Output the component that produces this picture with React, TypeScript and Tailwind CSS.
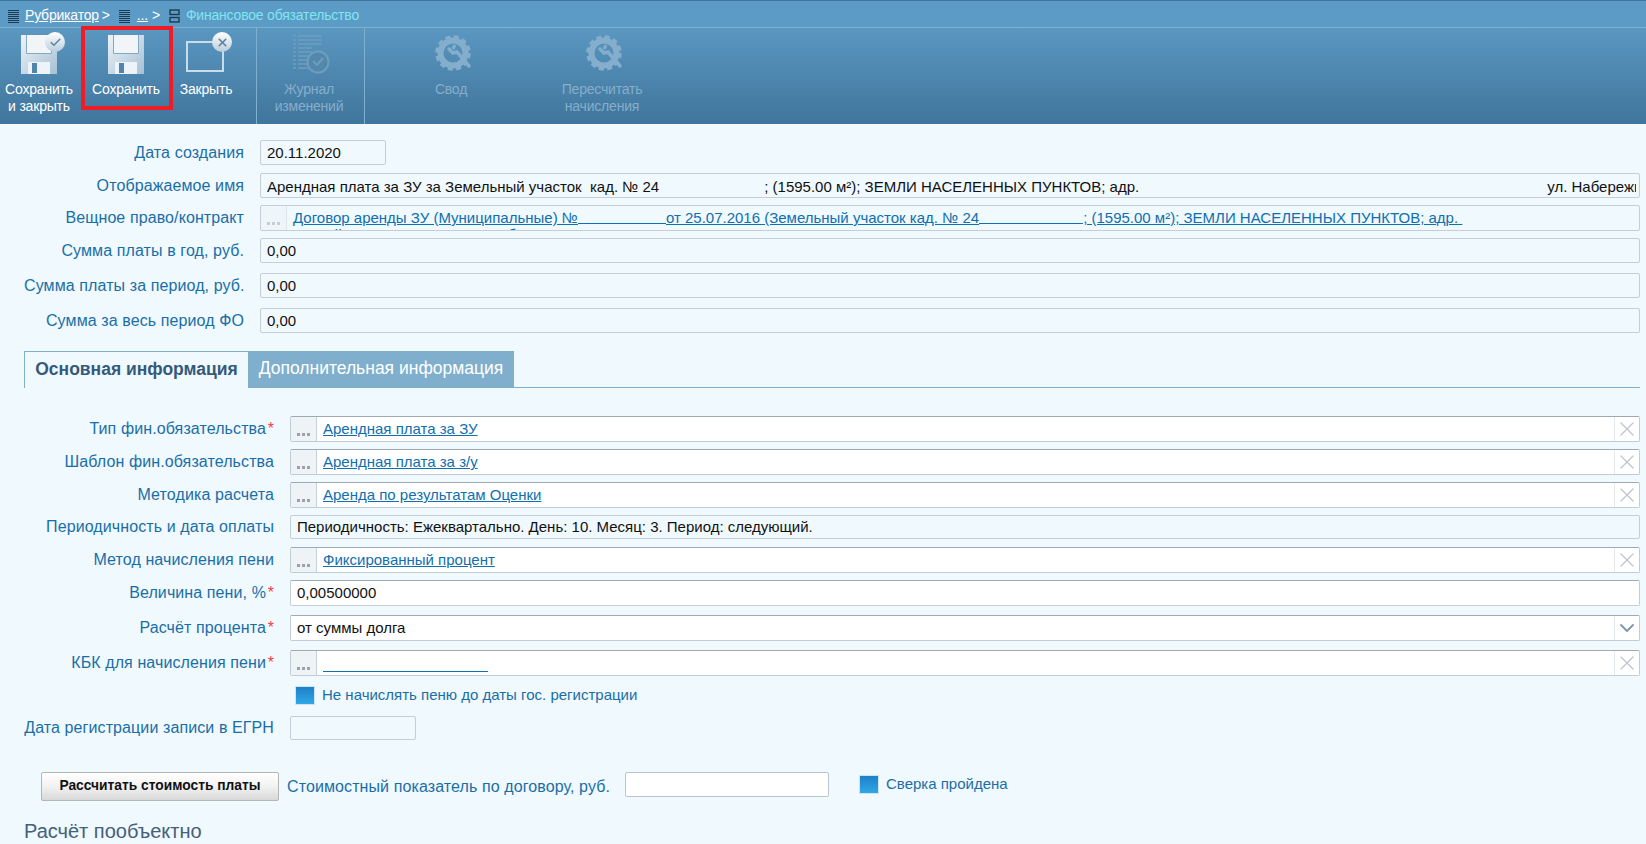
import React from 'react';
import { X, Check, ChevronDown } from 'lucide-react';

const SANS = { fontFamily: '"Liberation Sans", Arial, sans-serif' };

// floppy disk from the toolbar
const Floppy: React.FC<{ className?: string }> = ({ className }) => (
  <svg width="36" height="39" viewBox="0 0 36 39" className={className}>
    <defs>
      <linearGradient id="fl" x1="0" y1="0" x2="1" y2="1">
        <stop offset="0" stopColor="#eef4f8" />
        <stop offset="1" stopColor="#a6c0d4" />
      </linearGradient>
    </defs>
    <path d="M0 0h36v39H0z" fill="url(#fl)" />
    <path d="M6 0h24v18H6z" fill="#f1f5f8" />
    <path d="M5.5 0v18.5h25V0" fill="none" stroke="#84a9c4" strokeWidth="1" />
    <path d="M7 27h22v12H7z" fill="#eef3f7" />
    <path d="M11 28h5v10h-5z" fill="#4f86ad" />
  </svg>
);

const Gear: React.FC = () => (
  <svg width="38" height="38" viewBox="0 0 38 38" fill="none" stroke="#84aecb">
    <circle cx="18" cy="18" r="12.5" strokeWidth="6" />
    <circle cx="18" cy="18" r="16" strokeWidth="3.5" strokeDasharray="5 3.4" />
    <path d="M14 14l4 4 4-1 12 14" strokeWidth="3.5" strokeLinecap="round" />
    <path d="M20 10l-2 4" strokeWidth="3" />
  </svg>
);

const Journal: React.FC = () => (
  <svg width="40" height="42" viewBox="0 0 40 42" fill="none" stroke="#6f9dbd" strokeWidth="1.6">
    {[1, 5, 9, 13, 17, 21, 25, 29, 33].map((y, i) => (
      <path key={y} d={`M1 ${y}h3M6 ${y}h${i < 3 ? 24 : 14}`} />
    ))}
    <circle cx="26" cy="27" r="10.5" strokeWidth="2" fill="#5288ac" />
    <path d="M21 26l4 4 6-7" strokeWidth="2" />
  </svg>
);

const ListIcon: React.FC<{ stack?: boolean; className?: string }> = ({ stack, className }) =>
  stack ? (
    <svg width="11" height="14" viewBox="0 0 11 14" className={className} fill="none" stroke="#1d3a50" strokeWidth="1.4">
      <rect x="1" y="1" width="9" height="4.5" />
      <rect x="1" y="8.5" width="9" height="4.5" />
    </svg>
  ) : (
    <svg width="11" height="14" viewBox="0 0 11 14" className={className} stroke="#1d3a50" strokeWidth="1">
      {[1.5, 3.5, 5.5, 7.5, 9.5, 11.5, 13.5].map((y) => (
        <path key={y} d={`M0 ${y}h11`} />
      ))}
    </svg>
  );

const Badge: React.FC<{ className: string; children: React.ReactNode }> = ({ className, children }) => (
  <span className={`absolute flex h-[20px] w-[20px] items-center justify-center rounded-full bg-gradient-to-b from-white to-[#b9cedd] text-[#5d8099] ${className}`}>
    {children}
  </span>
);

const ToolLabel: React.FC<{ className: string; dim?: boolean; children: React.ReactNode }> = ({ className, dim, children }) => (
  <div
    className={`absolute text-center text-[14px] leading-[17px] -tracking-[0.2px] whitespace-nowrap -translate-x-1/2 ${dim ? 'text-[#86aeca]' : 'text-white'} ${className}`}
  >
    {children}
  </div>
);

const Label: React.FC<{ children: React.ReactNode; star?: boolean; wide?: boolean }> = ({ children, star, wide }) => (
  <div className={`shrink-0 whitespace-nowrap text-right text-[16px] leading-none tracking-[0.1px] text-[#1a6ea8] ${wide ? 'w-[250px]' : 'w-[220px]'}`}>
    {children}
    {star && <span className="inline-block w-[8px] text-right text-[#f0404f]">*</span>}
  </div>
);

const Dots: React.FC<{ faded?: boolean }> = ({ faded }) => (
  <div className={`flex h-full w-[26px] shrink-0 items-end justify-center gap-[2px] border-r border-[#c6d0da] bg-[#eef3f6] pb-[5px] ${faded ? 'opacity-50' : ''}`}>
    <i className="h-[3px] w-[3px] bg-[#9aa3ac]" />
    <i className="h-[3px] w-[3px] bg-[#9aa3ac]" />
    <i className="h-[3px] w-[3px] bg-[#9aa3ac]" />
  </div>
);

const Lookup: React.FC<{ text?: string; blank?: boolean }> = ({ text, blank }) => (
  <div className="flex h-full w-[1350px] overflow-hidden rounded-[2px] border border-[#c3ccd6] border-t-[#9ea9b4] bg-white">
    <Dots />
    <div className="flex-1 pl-[6px] text-[15px] leading-[23px] text-[#0f6fb0]">
      {blank ? <span className="mt-[20px] block h-px w-[165px] bg-[#0f6fb0]" /> : <span className="underline">{text}</span>}
    </div>
    <div className="flex w-[25px] shrink-0 items-center justify-center border-l border-[#e4e9ee] bg-white text-[#bcc5d0]">
      <X size={24} strokeWidth={1.3} />
    </div>
  </div>
);

const ReadOnly: React.FC<{ children?: React.ReactNode; className?: string }> = ({ children, className }) => (
  <div className={`h-full overflow-hidden whitespace-nowrap rounded-[2px] border border-[#c5ced8] pl-[6px] pr-[3px] text-[15px] text-[#111] ${className ?? 'w-[1380px] leading-[23px]'}`}>
    <div className="overflow-hidden">{children}</div>
  </div>
);

const Gap: React.FC<{ w: string }> = ({ w }) => <span className={`inline-block ${w}`} />;

// redacted stretch of a link, the underline still runs through it
const LinkGap: React.FC<{ w: string }> = ({ w }) => <span className={`inline-block h-px translate-y-[1px] bg-[#0f6fb0] ${w}`} />;

const Tick: React.FC = () => (
  <span className="block h-[19px] w-[20px] shrink-0 border border-[#cfe4f2] bg-gradient-to-b from-[#1f80c8] to-[#2fa8e6]" />
);

export default function App() {
  return (
    <div className="relative h-[844px] w-[1646px] overflow-hidden bg-[#f0f9fd]" style={SANS}>
      {/* breadcrumb */}
      <div className="relative h-[27px] border-t border-[#3f7499] bg-[#5c9bc6]">
        <div className="flex h-[26px] items-center pt-[3px] text-[14px] -tracking-[0.2px]">
          <ListIcon className="ml-[8px]" />
          <a className="ml-[6px] text-white underline">Рубрикатор</a>
          <span className="ml-[3px] text-white">&gt;</span>
          <ListIcon className="ml-[9px]" />
          <a className="ml-[7px] text-white underline">...</a>
          <span className="ml-[4px] text-white">&gt;</span>
          <ListIcon stack className="ml-[9px]" />
          <span className="ml-[6px] text-[#7fe6f0]">Финансовое обязательство</span>
        </div>
      </div>

      {/* toolbar */}
      <div className="relative h-[97px] border-t border-[#7fb0d0] bg-gradient-to-b from-[#5a97c1] to-[#40759c]">
        <Floppy className="absolute left-[21px] top-[7px]" />
        <Badge className="left-[45px] top-[4px]"><Check size={13} strokeWidth={2.6} /></Badge>
        <ToolLabel className="left-[39px] top-[53px]">Сохранить<br />и закрыть</ToolLabel>

        <Floppy className="absolute left-[108px] top-[7px]" />
        <ToolLabel className="left-[126px] top-[53px]">Сохранить</ToolLabel>

        <span className="absolute left-[186px] top-[13px] h-[31px] w-[38px] border-2 border-[#c8dce9]" />
        <Badge className="left-[212px] top-[4px]"><X size={13} strokeWidth={3} /></Badge>
        <ToolLabel className="left-[206px] top-[53px]">Закрыть</ToolLabel>

        <div className="absolute left-[256px] top-0 h-full w-px bg-[#7fb0d0]" />
        <div className="absolute left-[292px] top-[7px]"><Journal /></div>
        <ToolLabel dim className="left-[309px] top-[53px]">Журнал<br />изменений</ToolLabel>
        <div className="absolute left-[364px] top-0 h-full w-px bg-[#7fb0d0]" />

        <div className="absolute left-[435px] top-[7px]"><Gear /></div>
        <ToolLabel dim className="left-[451px] top-[53px]">Свод</ToolLabel>
        <div className="absolute left-[586px] top-[7px]"><Gear /></div>
        <ToolLabel dim className="left-[602px] top-[53px]">Пересчитать<br />начисления</ToolLabel>
      </div>

      {/* highlight from the screenshot */}
      <div className="absolute left-[81px] top-[26px] h-[84px] w-[92px] border-[4px] border-[#ee1c25]" />

      {/* upper fields */}
      <div className="flex flex-col pl-[24px]">
        <div className="mt-[16px] flex h-[25px] items-center">
          <Label>Дата создания</Label>
          <div className="ml-[16px] h-full"><ReadOnly className="w-[126px] leading-[23px]">20.11.2020</ReadOnly></div>
        </div>
        <div className="mt-[8px] flex h-[25px] items-center">
          <Label>Отображаемое имя</Label>
          <div className="ml-[16px] h-full">
            <ReadOnly className="w-[1380px] leading-[25px]">
              Арендная плата за ЗУ за Земельный участок&nbsp; кад. № 24<Gap w="w-[105px]" />; (1595.00 м²); ЗЕМЛИ НАСЕЛЕННЫХ ПУНКТОВ; адр.<Gap w="w-[408px]" />ул. Набережная
            </ReadOnly>
          </div>
        </div>
        <div className="mt-[7px] flex h-[26px] items-center">
          <Label>Вещное право/контракт</Label>
          <div className="ml-[16px] flex h-full w-[1380px] overflow-hidden rounded-[2px] border border-[#c5ced8]">
            <Dots faded />
            <div className="pl-[6px] pt-[3px] text-[15px] leading-[17px] whitespace-nowrap text-[#0f6fb0]">
              <div className="underline">
                Договор аренды ЗУ (Муниципальные) №<LinkGap w="w-[88px]" />от 25.07.2016 (Земельный участок кад. № 24<LinkGap w="w-[104px]" />; (1595.00 м²); ЗЕМЛИ НАСЕЛЕННЫХ ПУНКТОВ; адр.&nbsp;
              </div>
              <div className="underline">Российская Федерация, ул. Набережная</div>
            </div>
          </div>
        </div>
        <div className="mt-[7px] flex h-[25px] items-center">
          <Label>Сумма платы в год, руб.</Label>
          <div className="ml-[16px] h-full"><ReadOnly>0,00</ReadOnly></div>
        </div>
        <div className="mt-[10px] flex h-[25px] items-center">
          <Label>Сумма платы за период, руб.</Label>
          <div className="ml-[16px] h-full"><ReadOnly>0,00</ReadOnly></div>
        </div>
        <div className="mt-[10px] flex h-[25px] items-center">
          <Label>Сумма за весь период ФО</Label>
          <div className="ml-[16px] h-full"><ReadOnly>0,00</ReadOnly></div>
        </div>

        {/* tabs */}
        <div className="mt-[18px] flex h-[37px] w-[1616px] border-b border-[#7fafcd] text-[17.5px]">
          <div className="flex h-[37px] w-[224px] items-center justify-center border-l border-t border-[#7fafcd] bg-[#f0f9fd] pb-[2px] font-bold text-[#34597a]">
            Основная информация
          </div>
          <div className="flex h-[36px] w-[266px] items-center justify-center bg-[#7fafcd] pb-[2px] text-white">
            Дополнительная информация
          </div>
        </div>

        {/* lower fields */}
        <div className="mt-[28px] flex h-[26px] items-center">
          <Label wide star>Тип фин.обязательства</Label>
          <div className="ml-[16px] h-full"><Lookup text="Арендная плата за ЗУ" /></div>
        </div>
        <div className="mt-[7px] flex h-[26px] items-center">
          <Label wide>Шаблон фин.обязательства</Label>
          <div className="ml-[16px] h-full"><Lookup text="Арендная плата за з/у" /></div>
        </div>
        <div className="mt-[7px] flex h-[26px] items-center">
          <Label wide>Методика расчета</Label>
          <div className="ml-[16px] h-full"><Lookup text="Аренда по результатам Оценки" /></div>
        </div>
        <div className="mt-[7px] flex h-[24px] items-center">
          <Label wide>Периодичность и дата оплаты</Label>
          <div className="ml-[16px] h-full">
            <ReadOnly className="w-[1350px] leading-[22px]">Периодичность: Ежеквартально. День: 10. Месяц: 3. Период: следующий.</ReadOnly>
          </div>
        </div>
        <div className="mt-[8px] flex h-[26px] items-center">
          <Label wide>Метод начисления пени</Label>
          <div className="ml-[16px] h-full"><Lookup text="Фиксированный процент" /></div>
        </div>
        <div className="mt-[7px] flex h-[26px] items-center">
          <Label wide star>Величина пени, %</Label>
          <div className="ml-[16px] h-full">
            <ReadOnly className="w-[1350px] border-t-[#9ea9b4] bg-white leading-[23px]">0,00500000</ReadOnly>
          </div>
        </div>
        <div className="mt-[9px] flex h-[26px] items-center">
          <Label wide star>Расчёт процента</Label>
          <div className="ml-[16px] flex h-full w-[1350px] justify-between overflow-hidden rounded-[2px] border border-[#c3ccd6] border-t-[#9ea9b4] bg-white pl-[6px] text-[15px] leading-[24px] text-[#111]">
            от суммы долга
            <span className="flex w-[25px] items-center justify-center border-l border-[#e4e9ee] text-[#7f97a8]"><ChevronDown size={28} strokeWidth={1.8} /></span>
          </div>
        </div>
        <div className="mt-[9px] flex h-[26px] items-center">
          <Label wide star>КБК для начисления пени</Label>
          <div className="ml-[16px] h-full"><Lookup blank /></div>
        </div>
        <div className="mt-[10px] ml-[271px] flex h-[19px] items-center">
          <Tick />
          <span className="ml-[7px] text-[15px] text-[#1a6ea8]">Не начислять пеню до даты гос. регистрации</span>
        </div>
        <div className="mt-[11px] flex h-[24px] items-center">
          <Label wide>Дата регистрации записи в ЕГРН</Label>
          <div className="ml-[16px] h-full"><ReadOnly className="w-[126px]" /></div>
        </div>

        {/* calculation */}
        <div className="relative mt-[32px] h-[29px]">
          <button className="absolute left-[17px] top-0 h-[29px] w-[238px] rounded-[2px] border border-[#b5b5b5] bg-gradient-to-b from-white via-[#f2f2f2] to-[#d8d8d8] pb-[1px] text-[13.8px] font-bold text-[#111]">
            Рассчитать стоимость платы
          </button>
          <span className="absolute left-[263px] top-[3px] text-[16px] tracking-[0.1px] whitespace-nowrap text-[#1a6ea8]">Стоимостный показатель по договору, руб.</span>
          <span className="absolute left-[601px] top-0 h-[25px] w-[204px] rounded-[2px] border border-[#bcc4cd] bg-white" />
          <span className="absolute left-[835px] top-[3px]"><Tick /></span>
          <span className="absolute left-[862px] top-[1px] text-[15px] whitespace-nowrap text-[#1a6ea8]">Сверка пройдена</span>
        </div>
        <div className="mt-[19px] text-[20px] leading-[23px] text-[#44607a]">Расчёт пообъектно</div>
      </div>
    </div>
  );
}
